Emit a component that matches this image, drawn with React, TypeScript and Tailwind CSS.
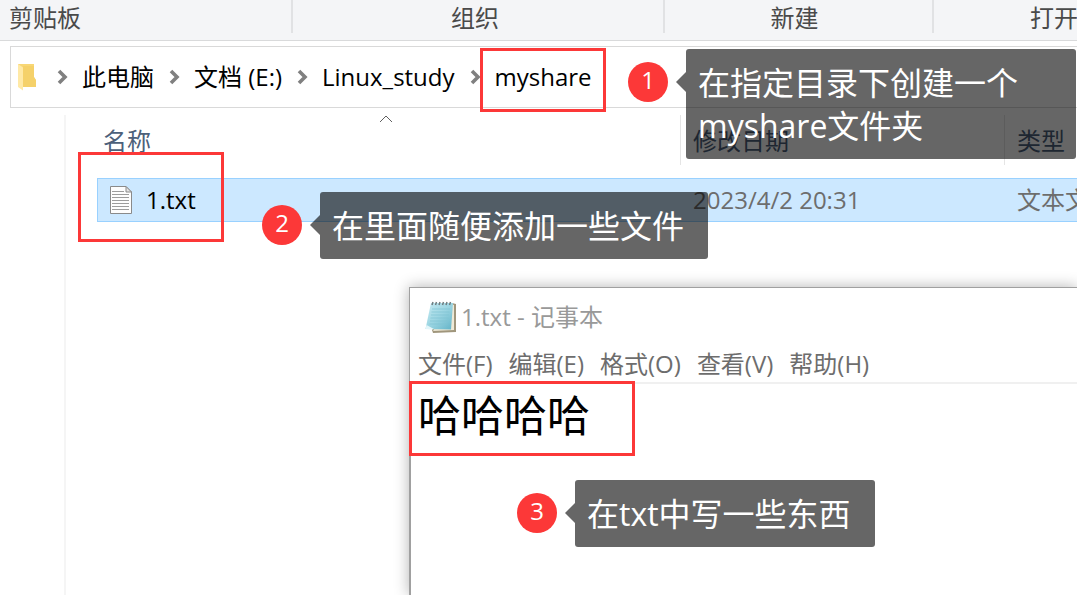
import React, { useState } from "react";

const groups = [
  { name: "剪贴板", style: "w-[293px] pl-[9px] border-r-2" },
  { name: "组织", style: "w-[372px] pr-1.5 text-center border-r-2" },
  { name: "新建", style: "w-[269px] pr-2 text-center border-r-2" },
  { name: "打开", style: "flex-1 pl-24" },
];

const crumbs = ["此电脑", "文档 (E:)", "Linux_study", "myshare"];

const menus = ["文件(F)", "编辑(E)", "格式(O)", "查看(V)", "帮助(H)"];

function FolderIcon() {
  return (
    <svg width="20" height="28" viewBox="0 0 20 28" className="shrink-0">
      <path d="M1 1h16v13l2 3v7H1z" fill="#f8d775" />
      <path d="M6 3h11v11l2 3v7H6z" fill="#f3cd62" opacity="0.6" />
      <path d="M1 1l5 3.5v23L1 24z" fill="#ffe9a6" />
    </svg>
  );
}

function Chevron() {
  return (
    <svg width="12" height="16" viewBox="0 0 12 16" className="shrink-0">
      <path d="M2 2l6 6-6 6" fill="none" stroke="#808080" strokeWidth="3.6" />
    </svg>
  );
}

function FileIcon() {
  return (
    <svg width="22" height="28" viewBox="0 0 22 28" className="shrink-0">
      <path d="M.5.5h15.500l5.500 5.500v21.500H.5z" fill="#fdfdfd" stroke="#8a8a8a" />
      <path d="M16 .5V6h5.500z" fill="#e4e4e4" stroke="#8a8a8a" />
      <path
        d="M2 5.500h12M2 8.500h17M2 11.500h17M2 14.500h17M2 17.500h17M2 20.500h17M2 23.500h17"
        stroke="#9c9c9c"
      />
    </svg>
  );
}

function NotepadIcon() {
  return (
    <svg width="32" height="34" viewBox="0 0 32 34" className="shrink-0">
      <defs>
        <linearGradient id="page" x1="0" y1="0" x2="1" y2="1">
          <stop offset="0" stopColor="#c9ecf3" />
          <stop offset="0.5" stopColor="#9bd5e2" />
          <stop offset="1" stopColor="#62b3c7" />
        </linearGradient>
      </defs>
      <path d="M27 3l4 1v28l-23 1-1-3z" fill="#a0967c" />
      <path d="M26 4l3 1v25l-21 1z" fill="#efe9d6" />
      <path d="M6 3h22l-2 26.500L.5 29z" fill="url(#page)" />
      <path d="M.5 29l1-4 8 4.300z" fill="#e3f6fa" />
      <path
        d="M7 9h18M6.500 12h18M6 15h18M5.500 18h18M5 21h18M4.500 24h18"
        stroke="#7fc3d3"
        strokeWidth="0.7"
      />
      <path
        d="M7 5l1-3M10.500 5l1-3M14 5l1-3M17.500 5l1-3M21 5l1-3M24.500 5l1-3"
        stroke="#6f7d81"
        strokeWidth="1.5"
      />
    </svg>
  );
}

function Callout({
  step,
  place,
  children,
}: {
  step: number;
  place: string;
  children: React.ReactNode;
}) {
  return (
    <div className={`absolute z-20 flex items-start text-white ${place}`}>
      <span className="mt-[13px] mr-2 h-10 w-10 shrink-0 rounded-full bg-[#fc3838] text-center text-2xl leading-9">
        {step}
      </span>
      <span className="mt-[23px] border-y-10 border-r-10 border-y-transparent border-r-black/60" />
      <p className="whitespace-nowrap rounded-[3px] bg-black/60 py-3 pr-6 pl-3 text-[32px] leading-[43px]">
        {children}
      </p>
    </div>
  );
}

function Notepad() {
  const [text, setText] = useState("哈哈哈哈");

  return (
    <section className="absolute top-[287px] right-0 bottom-0 left-[409px] z-10 flex flex-col border-t border-l border-[#a0a0a0] bg-white shadow-[0_0_14px_rgba(0,0,0,0.3)]">
      <div className="flex h-[57px] items-center gap-1 pl-[15px] text-2xl text-[#999999]">
        <NotepadIcon />
        <h1>1.txt - 记事本</h1>
      </div>
      <div className="flex h-[39px] items-center gap-4 border-b-2 border-[#f0f0f0] pl-2 text-2xl text-[#6d6d6d]">
        {menus.map((menu) => (
          <button key={menu} className="whitespace-nowrap">
            {menu}
          </button>
        ))}
      </div>
      <textarea
        aria-label="1.txt"
        value={text}
        onChange={(e) => setText(e.target.value)}
        spellCheck={false}
        className="flex-1 resize-none border-l border-[#a0a0a0] pl-[7px] text-[43px] leading-[64px] text-black outline-none"
      />
    </section>
  );
}

function App() {
  return (
    <div className="relative flex h-screen flex-col overflow-hidden bg-white font-['Open_Sans','Noto_Sans_CJK_SC',sans-serif] text-2xl font-normal">
      <div className="flex h-[41px] shrink-0 border-b border-[#d9dadb] bg-[#f4f5f7] text-[#4a4a4a]">
        {groups.map((group) => (
          <div
            key={group.name}
            className={`h-[33px] shrink-0 overflow-hidden whitespace-nowrap border-[#e1e2e4] leading-9 ${group.style}`}
          >
            {group.name}
          </div>
        ))}
      </div>

      <nav className="mt-[5px] ml-[10px] flex h-[62px] shrink-0 items-center border-y border-l border-[#d9d9d9] pl-1.5 text-black">
        <FolderIcon />
        {crumbs.map((crumb, i) => (
          <React.Fragment key={crumb}>
            <span className={i === 0 ? "ml-5" : "ml-[15px]"}>
              <Chevron />
            </span>
            <button className="ml-[13px] whitespace-nowrap">{crumb}</button>
          </React.Fragment>
        ))}
      </nav>

      <main className="mt-[7px] ml-16 flex-1 border-l-2 border-[#f5f5f5] pl-[31px]">
        <table className="w-full table-fixed border-separate border-spacing-0 text-left">
          <colgroup>
            <col className="w-[583px]" />
            <col className="w-[324px]" />
            <col />
          </colgroup>
          <thead className="text-[#4c607a]">
            <tr>
              <th className="p-0 pb-[13px] font-normal">
                <div className="h-[50px] pr-3 pl-1.5">
                  <svg width="14" height="8" viewBox="0 0 14 8" className="mx-auto">
                    <path d="M1 7l6-6 6 6" fill="none" stroke="#606060" />
                  </svg>
                  <span className="block leading-9">名称</span>
                </div>
              </th>
              <th className="p-0 pb-[13px] font-normal">
                <div className="h-[50px] border-l border-[#e5e5e5] pt-2 pl-3 leading-9">
                  修改日期
                </div>
              </th>
              <th className="p-0 pb-[13px] font-normal">
                <div className="h-[50px] border-l border-[#e5e5e5] pt-2 pl-3 leading-9">
                  类型
                </div>
              </th>
            </tr>
          </thead>
          <tbody className="text-[#6d6d6d]">
            <tr className="bg-[#cce8ff]">
              <td className="h-11 border-y border-l border-[#99d1ff] p-0 pl-3">
                <div className="flex items-center gap-[14px] text-black">
                  <FileIcon />
                  1.txt
                </div>
              </td>
              <td className="border-y border-[#99d1ff] p-0 pl-[13px]">2023/4/2 20:31</td>
              <td className="overflow-hidden whitespace-nowrap border-y border-[#99d1ff] p-0 pl-[13px]">
                文本文档
              </td>
            </tr>
          </tbody>
        </table>
      </main>

      <Notepad />

      <div className="absolute top-12 left-[480px] z-20 h-16 w-[126px] border-3 border-[#fc3838]" />
      <div className="absolute top-[152px] left-[78px] z-20 h-[90px] w-[146px] border-3 border-[#fc3838]" />
      <div className="absolute top-[381px] left-[409px] z-20 h-[75px] w-[226px] border-3 border-[#fc3838]" />

      <Callout step={1} place="top-[49px] left-[628px] right-px [&>p]:flex-1">
        在指定目录下创建一个
        <br />
        myshare文件夹
      </Callout>
      <Callout step={2} place="top-48 left-[262px]">
        在里面随便添加一些文件
      </Callout>
      <Callout step={3} place="top-[480px] left-[517px]">
        在txt中写一些东西
      </Callout>
    </div>
  );
}

export default App;
